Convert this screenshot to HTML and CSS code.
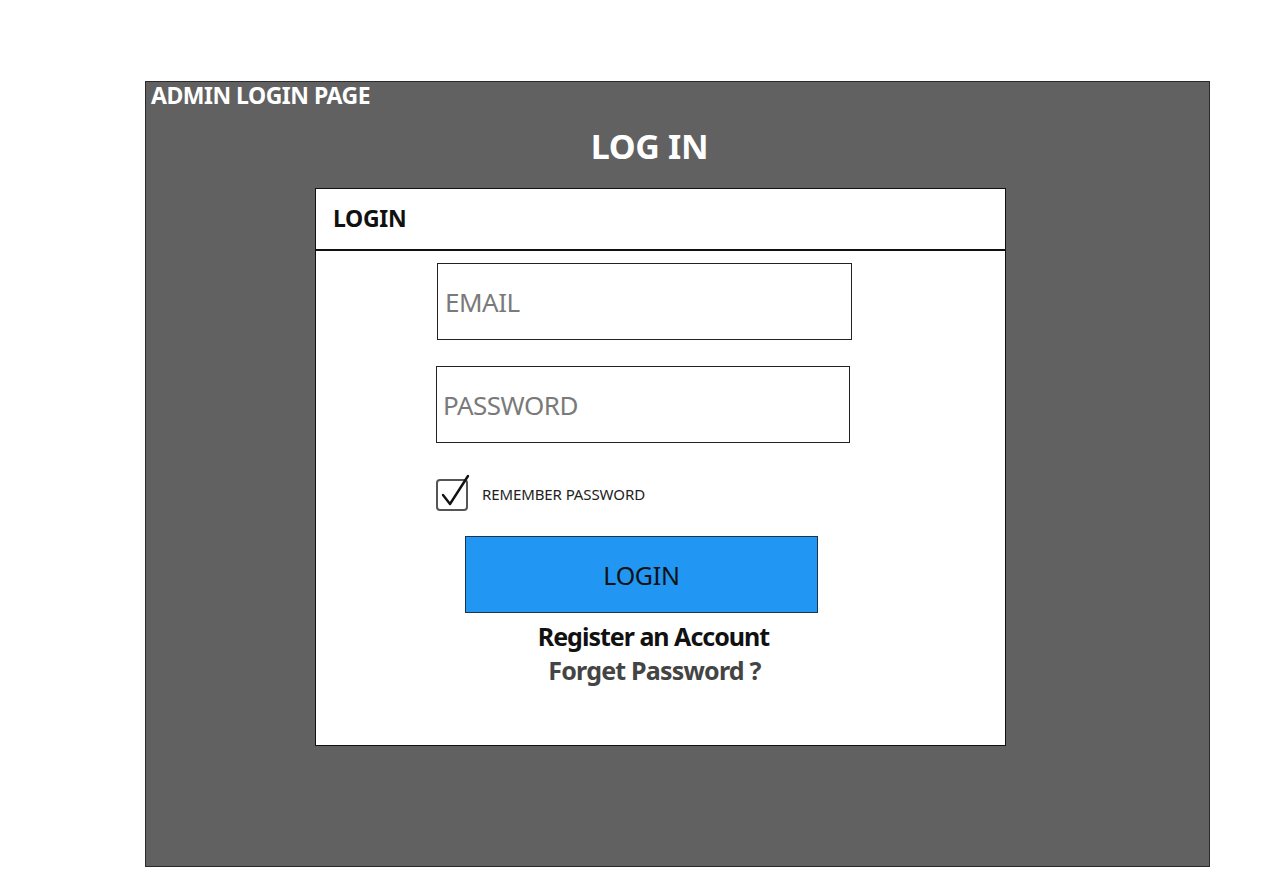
FILE: index.html
```html
<!DOCTYPE html>
<html>
<head>
<meta charset="utf-8">
<link rel="stylesheet" href="styles.css">
</head>
<body>
<div class="frame">
  <div class="page-title">ADMIN LOGIN PAGE</div>
  <div class="heading">LOG IN</div>
  <div class="card">
    <div class="card-header">LOGIN</div>
    <div class="card-body">
      <div class="field field-email">EMAIL</div>
      <div class="field field-password">PASSWORD</div>
      <div class="remember">
        <svg class="check" width="34" height="38" viewBox="0 0 34 38">
          <rect x="1" y="6" width="30" height="30" rx="3" ry="3" fill="none" stroke="#555" stroke-width="2"/>
          <path d="M7 21 L14 30 L32 2" fill="none" stroke="#111" stroke-width="2.4" stroke-linecap="round" stroke-linejoin="round"/>
        </svg>
        <span class="remember-label">REMEMBER PASSWORD</span>
      </div>
      <div class="btn">LOGIN</div>
      <div class="links">
        <div class="link-register">Register an Account</div>
        <div class="link-forget">Forget Password ?</div>
      </div>
    </div>
  </div>
</div>
</body>
</html>
```

FILE: styles.css
```css
html, body {
  margin: 0;
  padding: 0;
  background: #ffffff;
}
body {
  font-family: "Noto Sans", "Open Sans", sans-serif;
}
.frame {
  box-sizing: border-box;
  margin-left: 145px;
  margin-top: 81px;
  width: 1065px;
  height: 786px;
  background: #616161;
  border: 1px solid #2a2a2a;
  display: flex;
  flex-direction: column;
}
.page-title {
  color: #ffffff;
  font-weight: 700;
  font-size: 23px;
  line-height: 26px;
  padding-left: 5px;
  letter-spacing: -0.5px;
}
.heading {
  color: #ffffff;
  font-weight: 700;
  font-size: 34px;
  line-height: 40px;
  text-align: center;
  margin-top: 18px;
  padding-right: 56px;
  letter-spacing: -0.3px;
}
.card {
  box-sizing: border-box;
  margin-left: 169px;
  margin-top: 22px;
  width: 691px;
  height: 558px;
  background: #ffffff;
  border: 1px solid #111;
  display: flex;
  flex-direction: column;
}
.card-header {
  box-sizing: border-box;
  height: 62px;
  border-bottom: 2px solid #111;
  padding-left: 17px;
  padding-bottom: 2px;
  display: flex;
  align-items: center;
  font-weight: 700;
  font-size: 23px;
  color: #111;
  letter-spacing: -0.3px;
}
.card-body {
  display: flex;
  flex-direction: column;
  padding-left: 120px;
  padding-top: 12px;
}
.field {
  box-sizing: border-box;
  width: 415px;
  height: 77px;
  border: 1px solid #222;
  display: flex;
  align-items: center;
  color: #7a7a7a;
  font-size: 26px;
  letter-spacing: -0.5px;
  padding-left: 7px;
}
.field-email {
  margin-left: 1px;
}
.field-password {
  margin-top: 26px;
  width: 414px;
  padding-left: 6px;
}
.remember {
  display: flex;
  align-items: center;
  margin-top: 31px;
  height: 38px;
}
.check {
  display: block;
}
.remember-label {
  font-size: 15px;
  color: #222;
  margin-left: 12px;
  margin-top: 1px;
  letter-spacing: -0.1px;
}
.btn {
  box-sizing: border-box;
  margin-left: 29px;
  margin-top: 24px;
  width: 353px;
  height: 77px;
  background: #2196f3;
  border: 1px solid #1a3550;
  display: flex;
  align-items: center;
  justify-content: center;
  font-size: 25px;
  color: #111;
  letter-spacing: -0.3px;
}
.links {
  display: flex;
  flex-direction: column;
  align-items: center;
  width: 435px;
  margin-top: 6px;
  font-weight: 700;
  font-size: 25px;
  line-height: 34px;
  letter-spacing: -1px;
}
.link-register {
  color: #111;
}
.link-forget {
  color: #444;
  margin-left: 2px;
  letter-spacing: -0.8px;
}
```
